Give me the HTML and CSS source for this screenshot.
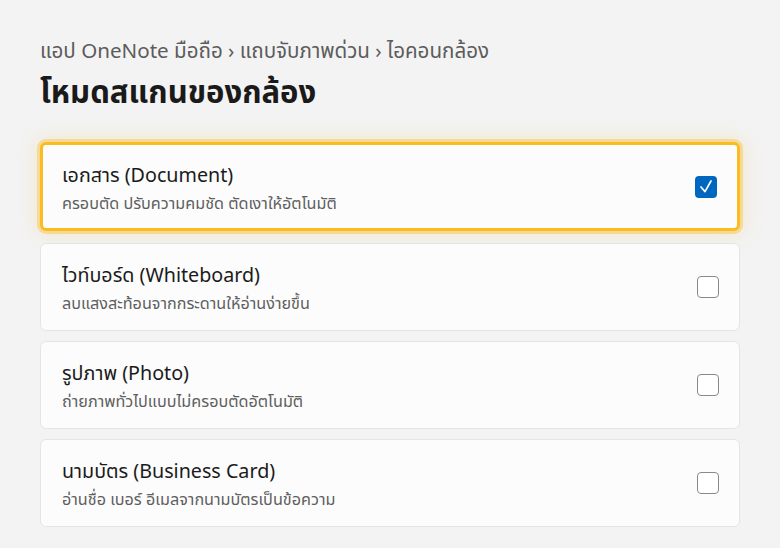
FILE: index.html
```html
<!DOCTYPE html>
<html lang="th">
<head>
<meta charset="utf-8">
<title>โหมดสแกนของกล้อง</title>
<link rel="stylesheet" href="styles.css">
</head>
<body>
<main class="page">
  <nav class="crumbs">แอป OneNote มือถือ › แถบจับภาพด่วน › ไอคอนกล้อง</nav>
  <h1 class="title">โหมดสแกนของกล้อง</h1>
  <ul class="modes">
    <li class="mode is-selected">
      <div class="mode-text">
        <div class="mode-name">เอกสาร (Document)</div>
        <div class="mode-desc">ครอบตัด ปรับความคมชัด ตัดเงาให้อัตโนมัติ</div>
      </div>
      <span class="check is-checked"><svg class="tick" viewBox="0 0 22 22" width="22" height="22"><path d="M6 11 L10 15.6 L16 5" fill="none" stroke="#ffffff" stroke-width="1.7" stroke-linecap="round" stroke-linejoin="round"/></svg></span>
    </li>
    <li class="mode">
      <div class="mode-text">
        <div class="mode-name">ไวท์บอร์ด (Whiteboard)</div>
        <div class="mode-desc">ลบแสงสะท้อนจากกระดานให้อ่านง่ายขึ้น</div>
      </div>
      <span class="check"></span>
    </li>
    <li class="mode">
      <div class="mode-text">
        <div class="mode-name">รูปภาพ (Photo)</div>
        <div class="mode-desc">ถ่ายภาพทั่วไปแบบไม่ครอบตัดอัตโนมัติ</div>
      </div>
      <span class="check"></span>
    </li>
    <li class="mode">
      <div class="mode-text">
        <div class="mode-name">นามบัตร (Business Card)</div>
        <div class="mode-desc">อ่านชื่อ เบอร์ อีเมลจากนามบัตรเป็นข้อความ</div>
      </div>
      <span class="check"></span>
    </li>
  </ul>
</main>
</body>
</html>
```

FILE: styles.css
```css
html, body {
  margin: 0;
  padding: 0;
  background: #f3f3f3;
}
body {
  font-family: "Noto Sans Thai", "Noto Sans", "Noto Sans CJK SC", sans-serif;
  color: #1b1b1b;
}
.page {
  padding: 38px 40px 0 40px;
}
.crumbs {
  font-size: 20.6px;
  line-height: 28px;
  color: #5c5c5c;
}
.title {
  margin: 8px 0 0 0;
  font-size: 31px;
  line-height: 40px;
  font-weight: 700;
  color: #1a1a1a;
}
.modes {
  list-style: none;
  margin: 28px 0 0 0;
  padding: 0;
  display: flex;
  flex-direction: column;
  gap: 10px;
}
.mode {
  display: flex;
  align-items: center;
  justify-content: space-between;
  height: 88px;
  box-sizing: border-box;
  padding: 0 20px 0 21px;
  background: #fcfcfc;
  border: 1px solid #e5e5e5;
  border-radius: 6px;
}
.mode.is-selected {
  height: 89px;
  margin-bottom: 2px;
  border: 3px solid #fbbc22;
  padding: 0 20px 0 19px;
  box-shadow: 0 0 0 3px rgba(251, 196, 60, 0.45), 0 0 18px 4px rgba(240, 200, 100, 0.25);
}
.mode-text {
  display: flex;
  flex-direction: column;
  gap: 4px;
  padding-top: 4px;
}
.mode-name {
  font-size: 19.7px;
  line-height: 26px;
  color: #1b1b1b;
}
.mode-desc {
  font-size: 16.2px;
  line-height: 22px;
  color: #5f5f5f;
}
.check {
  width: 22px;
  height: 22px;
  box-sizing: border-box;
  border: 1px solid #8a8a8a;
  border-radius: 4px;
  background: #ffffff;
  display: flex;
  align-items: center;
  justify-content: center;
}
.check.is-checked {
  background: #0067c0;
  border: none;
}
.tick {
  display: block;
}
```
